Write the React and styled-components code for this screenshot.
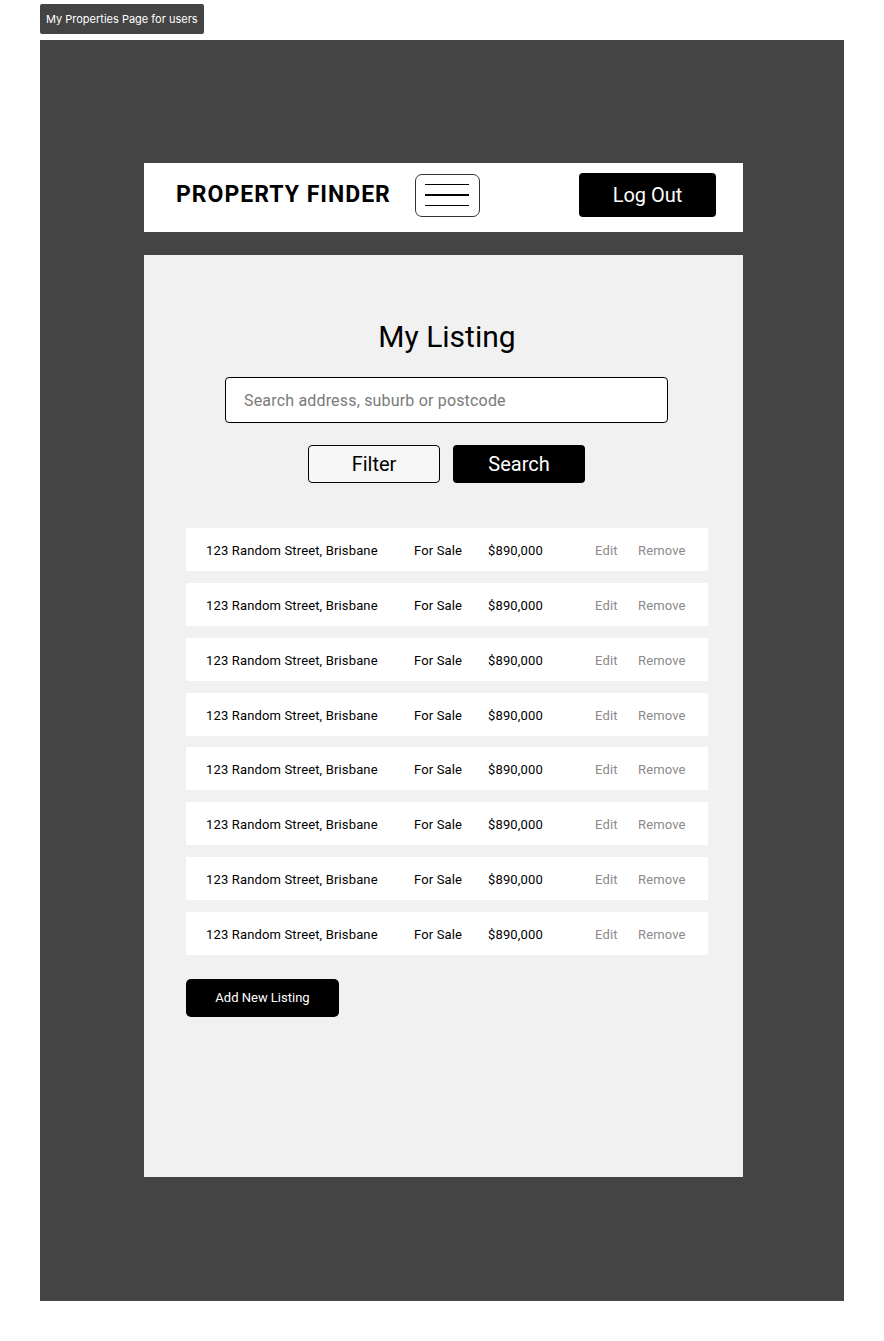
import React from "react";
import styled, { createGlobalStyle } from "styled-components";

const Global = createGlobalStyle`
  html, body { margin: 0; padding: 0; background: #fff; }
  body { font-family: Roboto, "Liberation Sans", sans-serif; }
  * { box-sizing: border-box; }
`;

const Page = styled.div`
  width: 884px;
  padding: 4px 0 40px 40px;
`;

const FrameLabel = styled.div`
  display: inline-flex;
  align-items: center;
  height: 30px;
  padding: 0 6px;
  background: #444;
  color: #fff;
  border-radius: 2px;
  font-family: Inter, "Liberation Sans", sans-serif;
  font-size: 11px;
`;

const Frame = styled.div`
  margin-top: 6px;
  width: 804px;
  height: 1261px;
  background: #444;
  padding: 123px 0 0 104px;
`;

const Header = styled.header`
  width: 599px;
  height: 69px;
  background: #fff;
  display: flex;
  align-items: center;
  padding: 0 27px 5px 32px;
`;

const Brand = styled.div`
  font-size: 23px;
  font-weight: 700;
  color: #000;
  letter-spacing: 1px;
  line-height: 28px;
`;

const MenuButton = styled.div`
  margin-left: 24px;
  width: 65px;
  height: 43px;
  border: 1px solid #333;
  border-radius: 7px;
  display: flex;
  flex-direction: column;
  justify-content: center;
  align-items: center;
  gap: 9.5px;
`;

const MenuLine = styled.span`
  display: block;
  width: 44px;
  height: 1.3px;
  background: #000;
`;

const DarkButton = styled.button`
  border: none;
  background: #000;
  color: #fff;
  font-family: Roboto, "Liberation Sans", sans-serif;
  border-radius: ${(p) => p.$radius || 4}px;
  width: ${(p) => p.$w}px;
  height: ${(p) => p.$h}px;
  font-size: ${(p) => p.$fs}px;
  padding: 0;
  cursor: pointer;
`;

const LogOut = styled(DarkButton)`
  margin-left: auto;
`;

const Panel = styled.main`
  margin-top: 23px;
  width: 599px;
  height: 922px;
  background: #f1f1f1;
  padding: 63px 35px 0 42px;
  display: flex;
  flex-direction: column;
`;

const Title = styled.h1`
  margin: 0;
  font-size: 30px;
  font-weight: 400;
  line-height: 38px;
  text-align: center;
  color: #000;
`;

const SearchInput = styled.input`
  margin: 21px 0 0 39px;
  width: 443px;
  height: 46px;
  border: 1px solid #000;
  border-radius: 4px;
  background: #fff;
  padding: 0 18px;
  font-family: Roboto, "Liberation Sans", sans-serif;
  font-size: 16px;
  letter-spacing: 0.18px;
  color: #000;
  outline: none;
  &::placeholder { color: #7a7a7a; }
`;

const ButtonRow = styled.div`
  margin: 22px 0 0 122px;
  display: flex;
  gap: 13px;
`;

const OutlineButton = styled.button`
  width: 132px;
  height: 38px;
  border: 1px solid #000;
  border-radius: 4px;
  background: #f7f7f7;
  color: #000;
  font-family: Roboto, "Liberation Sans", sans-serif;
  font-size: 20px;
  padding: 0;
`;

const List = styled.div`
  margin-top: 45px;
  display: flex;
  flex-direction: column;
  gap: 11.86px;
`;

const Row = styled.div`
  width: 522px;
  height: 43px;
  background: #fff;
  display: grid;
  grid-template-columns: 208px 74px 107px 43px 1fr;
  align-items: center;
  padding: 2px 0 0 20px;
  font-size: 13px;
  letter-spacing: 0.15px;
`;

const Cell = styled.span`
  color: ${(p) => (p.$muted ? "#8a8a8a" : "#000")};
  white-space: nowrap;
`;

const AddButton = styled(DarkButton)`
  margin-top: 24px;
  padding-bottom: 2px;
`;

const rows = Array.from({ length: 8 }, () => ({
  address: "123 Random Street, Brisbane",
  status: "For Sale",
  price: "$890,000",
}));

export default function App() {
  return (
    <Page>
      <Global />
      <FrameLabel>My Properties Page for users</FrameLabel>
      <Frame>
        <Header>
          <Brand>PROPERTY FINDER</Brand>
          <MenuButton>
            <MenuLine />
            <MenuLine />
            <MenuLine />
          </MenuButton>
          <LogOut $w={137} $h={44} $fs={20}>Log Out</LogOut>
        </Header>
        <Panel>
          <Title>My Listing</Title>
          <SearchInput placeholder="Search address, suburb or postcode" />
          <ButtonRow>
            <OutlineButton>Filter</OutlineButton>
            <DarkButton $w={132} $h={38} $fs={20}>Search</DarkButton>
          </ButtonRow>
          <List>
            {rows.map((r, i) => (
              <Row key={i}>
                <Cell>{r.address}</Cell>
                <Cell>{r.status}</Cell>
                <Cell>{r.price}</Cell>
                <Cell $muted>Edit</Cell>
                <Cell $muted>Remove</Cell>
              </Row>
            ))}
          </List>
          <AddButton $w={153} $h={38} $fs={13} $radius={5}>Add New Listing</AddButton>
        </Panel>
      </Frame>
    </Page>
  );
}
